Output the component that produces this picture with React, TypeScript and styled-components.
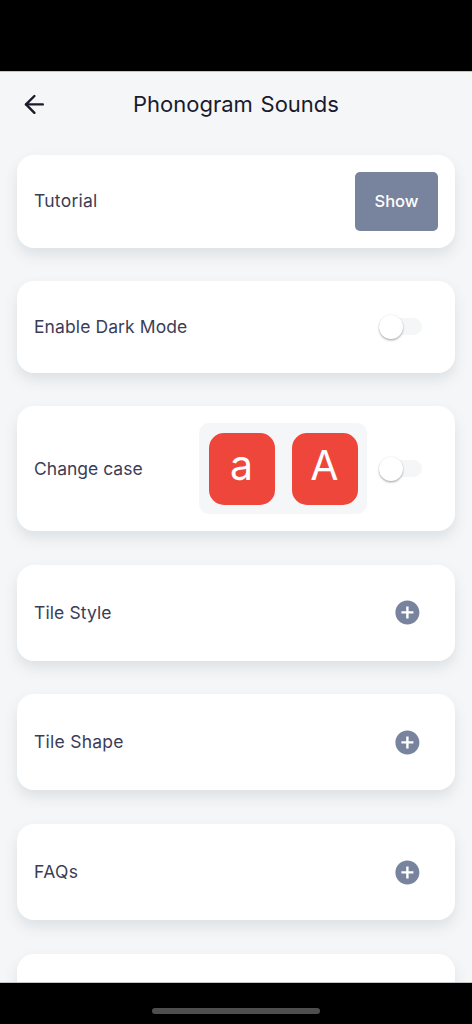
import { useState } from "react";
import styled, { createGlobalStyle } from "styled-components";
import { ArrowLeft } from "lucide-react";
import { MdAddCircle } from "react-icons/md";

const GlobalStyle = createGlobalStyle`
  * {
    box-sizing: border-box;
  }

  body {
    margin: 0;
    background: #000;
    font-family: Inter, "Liberation Sans", sans-serif;
  }
`;

const Screen = styled.div`
  width: 100%;
  height: 100vh;
  display: flex;
  flex-direction: column;
  background: #000;
  overflow: hidden;
`;

const StatusBar = styled.div`
  flex: none;
  height: 71px;
`;

const Page = styled.main`
  flex: 1;
  min-height: 0;
  overflow: hidden;
  background: #f5f6f8;
  border-top: 1px solid #c3c4c5;
  border-bottom: 1px solid #c3c4c5;
`;

const Header = styled.header`
  height: 83px;
  padding: 0 20px 18px 20px;
  display: grid;
  grid-template-columns: 28.8px 1fr 28.8px;
  align-items: center;
`;

const BackButton = styled.button`
  display: flex;
  padding: 0;
  border: 0;
  background: none;
  color: #1a1a2e;
`;

const Title = styled.h1`
  margin: 0;
  padding-bottom: 2px;
  font-size: 22px;
  line-height: 28px;
  font-weight: 400;
  word-spacing: 1.5px;
  text-align: center;
  color: #1a1a2e;
`;

const CardList = styled.div`
  display: flex;
  flex-direction: column;
  gap: 33.5px;
  padding: 0 17px;
`;

const Card = styled.section<{ $height: number; $right?: number }>`
  flex: none;
  height: ${({ $height }) => $height}px;
  padding: 0 ${({ $right }) => $right ?? 17}px 0 17px;
  display: flex;
  align-items: center;
  background: #fff;
  border-radius: 17px;
  box-shadow: 0 7px 14px rgba(47, 79, 79, 0.12);
`;

const Label = styled.span<{ $spacing?: number }>`
  flex: 1;
  font-size: 17.5px;
  line-height: 24px;
  letter-spacing: ${({ $spacing }) => $spacing ?? 0.1}px;
  color: #3b3d57;
`;

const ShowButton = styled.button`
  width: 83px;
  height: 59px;
  padding: 0;
  border: 0;
  border-radius: 5px;
  background: #78839e;
  color: #fff;
  font-family: inherit;
  font-size: 16.5px;
  font-weight: 500;
`;

const Switch = styled.button`
  width: 43px;
  height: 24px;
  padding: 0;
  border: 0;
  background: none;
  display: flex;
  align-items: center;
`;

const Track = styled.span`
  width: 43px;
  height: 17px;
  display: flex;
  align-items: center;
  border-radius: 9px;
  background: #f5f6f8;
`;

const Thumb = styled.span<{ $on: boolean }>`
  flex: none;
  width: 24px;
  height: 24px;
  margin-left: ${({ $on }) => ($on ? 19 : 0)}px;
  border-radius: 50%;
  background: #fff;
  box-shadow: 0 1.5px 2px rgba(0, 0, 0, 0.28), 0 0 2px rgba(0, 0, 0, 0.1);
`;

const TilePreview = styled.div`
  width: 168px;
  height: 91px;
  margin-right: 12px;
  display: flex;
  align-items: center;
  justify-content: center;
  gap: 17px;
  border-radius: 10px;
  background: #f5f6f8;
`;

const Tile = styled.div`
  width: 66px;
  height: 72px;
  padding-bottom: 6px;
  display: flex;
  align-items: center;
  justify-content: center;
  border-radius: 15px;
  background: #ef463b;
  color: #fff;
  font-size: 41px;
  line-height: 1;
`;

const ExpandIcon = styled(MdAddCircle)`
  flex: none;
  color: #78839e;
`;

const HomeBar = styled.footer`
  flex: none;
  height: 41px;
  padding-top: 25px;
  display: flex;
  justify-content: center;
`;

const HomeIndicator = styled.div`
  width: 168px;
  height: 6px;
  border-radius: 3px;
  background: #4e4e4e;
`;

const sections = [
  { name: "Tile Style", spacing: 0.1 },
  { name: "Tile Shape", spacing: 0.25 },
  { name: "FAQs", spacing: 0.4 },
];

type ToggleProps = {
  label: string;
  checked: boolean;
  onChange: (value: boolean) => void;
};

const Toggle = ({ label, checked, onChange }: ToggleProps) => (
  <Switch
    role="switch"
    aria-label={label}
    aria-checked={checked}
    onClick={() => onChange(!checked)}
  >
    <Track>
      <Thumb $on={checked} />
    </Track>
  </Switch>
);

const App = () => {
  const [darkMode, setDarkMode] = useState(false);
  const [upperCase, setUpperCase] = useState(false);

  return (
    <Screen>
      <GlobalStyle />
      <StatusBar />
      <Page>
        <Header>
          <BackButton aria-label="Back">
            <ArrowLeft size={28.8} strokeWidth={2} />
          </BackButton>
          <Title>Phonogram Sounds</Title>
        </Header>
        <CardList>
          <Card $height={92.5}>
            <Label $spacing={0.25}>Tutorial</Label>
            <ShowButton>Show</ShowButton>
          </Card>
          <Card $height={91.8} $right={33}>
            <Label>Enable Dark Mode</Label>
            <Toggle
              label="Enable Dark Mode"
              checked={darkMode}
              onChange={setDarkMode}
            />
          </Card>
          <Card $height={124.8} $right={33}>
            <Label $spacing={0}>Change case</Label>
            <TilePreview>
              <Tile>a</Tile>
              <Tile>A</Tile>
            </TilePreview>
            <Toggle
              label="Change case"
              checked={upperCase}
              onChange={setUpperCase}
            />
          </Card>
          {sections.map((section) => (
            <Card key={section.name} $height={96.2} $right={33.6}>
              <Label $spacing={section.spacing}>{section.name}</Label>
              <ExpandIcon size={28.8} />
            </Card>
          ))}
          <Card $height={96.2} />
        </CardList>
      </Page>
      <HomeBar>
        <HomeIndicator />
      </HomeBar>
    </Screen>
  );
};

export default App;
